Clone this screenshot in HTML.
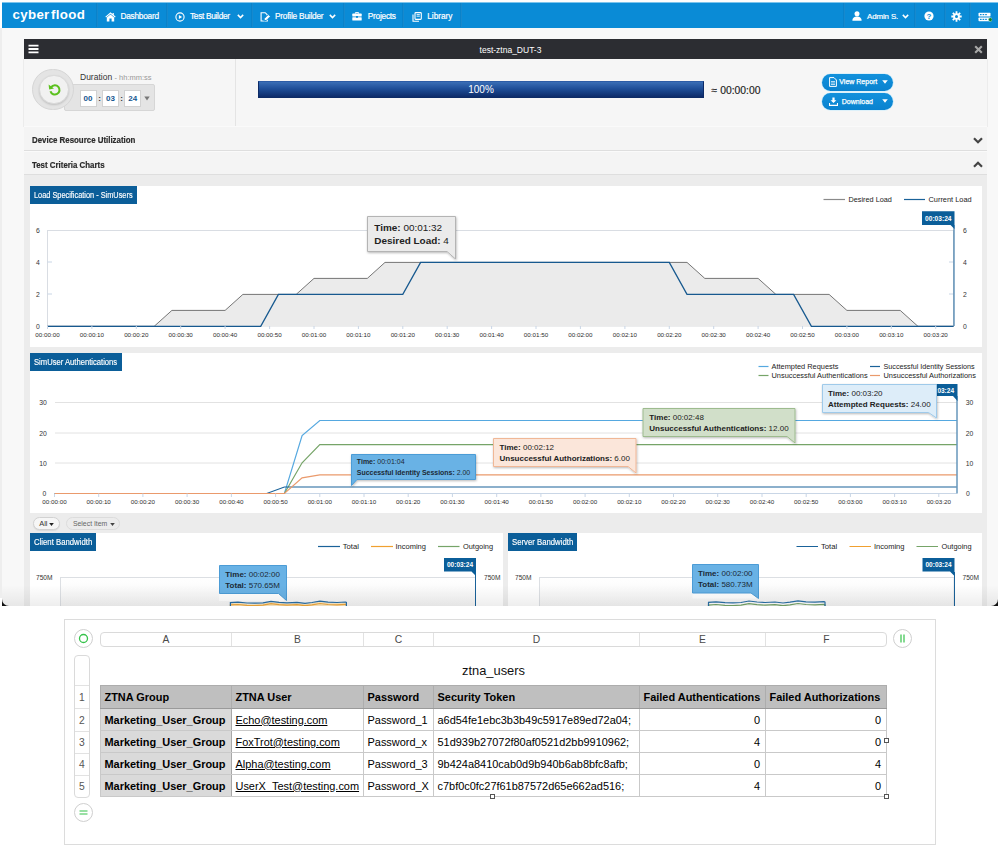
<!DOCTYPE html>
<html lang="en">
<head>
<meta charset="utf-8">
<title>test-ztna_DUT-3</title>
<style>
html,body{margin:0;padding:0;background:#fff;}
body{width:1000px;height:846px;position:relative;overflow:hidden;font-family:"Liberation Sans",sans-serif;color:#222;}
.abs{position:absolute;}
#corner{position:absolute;left:1.8px;top:590px;width:996.6px;height:16.3px;background:#111;}
#shot{position:absolute;left:1.8px;top:0;width:996.6px;height:606.3px;background:#f8f8f8;border-radius:0 0 7px 7px;overflow:hidden;}
#shot .in{position:absolute;left:-1.8px;top:0;width:1000px;height:607px;}
#nav{position:absolute;left:2px;top:2px;width:996.4px;height:25.6px;background:#0a8bd6;border-top:1px solid #7cc4ec;box-sizing:border-box;}
#nav .sep{position:absolute;top:0;width:1px;height:24px;background:rgba(0,40,90,0.09);border-right:1px solid rgba(255,255,255,0.06);}
#nav .t{position:absolute;top:7.6px;color:#fff;font-size:8.3px;line-height:11px;white-space:nowrap;letter-spacing:-0.2px;-webkit-text-stroke:0.2px #fff;}
#logo{position:absolute;left:10.6px;top:3.8px;color:#fff;font-weight:bold;font-size:13.3px;line-height:16px;letter-spacing:0.3px;}
#tbar{position:absolute;left:24px;top:39.3px;width:963px;height:19.6px;background:#2c2d32;}
#tbar .title{position:absolute;left:5px;width:100%;top:4.8px;text-align:center;color:#fff;font-size:8.5px;line-height:12px;}
#ctrl{position:absolute;left:24px;top:59px;width:963px;height:67px;background:#f6f6f6;border-bottom:1px solid #e3e3e3;box-shadow:1px 0 0 #ececec, -1px 0 0 #ececec;}
.row{position:absolute;left:24px;width:963px;height:22.5px;background:#f4f4f4;border-bottom:1.5px solid #dedede;border-top:1px solid #fafafa;box-sizing:content-box;}
.row .lbl{position:absolute;left:8px;top:7.6px;font-size:8.7px;line-height:11px;font-weight:bold;color:#2a2a2a;white-space:nowrap;transform:scaleX(0.907);transform-origin:0 0;-webkit-text-stroke:0.2px #2a2a2a;}
#cbg{position:absolute;left:24px;top:175px;width:963px;height:432px;background:#ececec;}
.panel{position:absolute;background:#fff;}
.tag{position:absolute;background:#0b5e99;color:#fff;font-size:8.3px;line-height:11px;white-space:nowrap;height:18px;box-sizing:border-box;padding:4.2px 0 0 4.3px;}
.tag span{display:inline-block;transform-origin:0 0;-webkit-text-stroke:0.15px #fff;}
.pill{position:absolute;height:13px;border-radius:7px;border:1px solid #d6d6d6;background:#f4f4f4;box-sizing:border-box;font-size:7.8px;line-height:11px;color:#666;white-space:nowrap;text-align:center;}
.tb{position:absolute;top:31px;width:17px;height:17px;background:#fff;border:1px solid #d2d2d2;box-sizing:border-box;color:#14568f;font-size:8px;line-height:15px;text-align:center;font-weight:bold;}
.tc{position:absolute;top:33.8px;width:5px;text-align:center;font-size:8px;line-height:12px;color:#333;font-weight:bold;}
.btn{position:absolute;left:797.8px;width:70.8px;height:17px;border-radius:9px;background:linear-gradient(#1291dc,#0a82cf);box-sizing:border-box;box-shadow:0 0 0 0.6px rgba(190,235,255,0.9);}
.btn span{position:absolute;top:3.5px;color:#fff;font-size:7px;line-height:10px;white-space:nowrap;-webkit-text-stroke:0.25px #fff;}
#sheet{position:absolute;left:64px;top:619px;width:872px;height:225.5px;border:1px solid #dcdcdc;box-sizing:border-box;background:#fff;}
#sheet > *{position:absolute;}
#sheet .circ{margin:-620px 0 0 -65px;width:19px;height:19px;border-radius:10px;border:1px solid #cfcfcf;box-sizing:border-box;background:#fff;}
#sheet .circ svg{position:absolute;left:-1px;top:-1px;}
#colh{left:35px;top:12px;width:787px;height:15px;border:1px solid #dadada;border-radius:4px;box-sizing:border-box;}
#colh div{position:absolute;top:0;height:13px;box-sizing:border-box;border-right:1px solid #e2e2e2;text-align:center;font-size:10.3px;line-height:14px;color:#4a4a4a;}
#rowh{left:9px;top:35px;width:15.5px;height:143px;border:1px solid #dadada;border-radius:4px;box-sizing:border-box;}
#rowh div{position:absolute;left:0;width:13.5px;height:22px;box-sizing:border-box;border-bottom:1px solid #e2e2e2;text-align:center;font-size:10.3px;line-height:22.5px;color:#555;}
#stitle{left:35px;top:43px;width:787px;text-align:center;font-size:12.9px;line-height:16px;color:#111;}
#tbl{left:34.5px;top:65px;border-collapse:collapse;table-layout:fixed;width:787px;font-size:10.95px;color:#000;}
#tbl th,#tbl td{height:22px;box-sizing:border-box;padding:0 0 0 4px;border:1px solid #c9c9c9;text-align:left;white-space:nowrap;overflow:hidden;line-height:18px;}
#tbl th{background:#bfbfbf;border-color:#adadad;border-bottom:1.5px solid #9a9a9a;height:23px;line-height:20px;}
#tbl td.g{background:#dadada;font-weight:bold;border-right-color:#a8a8a8;}
#tbl td{padding-bottom:0;}
#tbl td.n{text-align:right;padding-right:4.5px;}
#sheet .hd{width:5px;height:5px;border:1px solid #555;background:#fff;box-sizing:border-box;margin:-619px 0 0 -64px;}
svg text{font-family:"Liberation Sans",sans-serif;}
</style>
</head>
<body>
<div id="corner"></div>
<div class="abs" style="left:0;top:28px;width:2px;height:570px;background:#eee"></div>
<div id="shot"><div class="in">
  <div class="abs" style="left:0;top:0;width:1000px;height:2.5px;background:#fdfdfc"></div>
  <div id="nav">
    <div id="logo">cybe<span style="letter-spacing:1.8px">r</span>flood</div>
    <div class="sep" style="left:94px"></div><div class="sep" style="left:164px"></div><div class="sep" style="left:249px"></div><div class="sep" style="left:341px"></div><div class="sep" style="left:400px"></div><div class="sep" style="left:458px"></div>
    <div class="sep" style="left:841px"></div><div class="sep" style="left:912px"></div><div class="sep" style="left:942px"></div><div class="sep" style="left:967px"></div>
    <svg class="abs" style="left:103px;top:9px" width="11" height="10" viewBox="0 0 11 10"><path d="M5.5 0.2 L0.3 4.8 L1.1 5.6 L5.5 1.8 L9.9 5.6 L10.7 4.8 L8.8 3.1 V0.9 H7.6 V2 Z" fill="#fff"/><path d="M1.8 5.6 L5.5 2.5 L9.2 5.6 V9.6 H6.6 V6.6 H4.4 V9.6 H1.8 Z" fill="#fff"/></svg>
    <div class="t" style="left:118.5px;font-size:8.3px;letter-spacing:-0.25px">Dashboard</div>
    <svg class="abs" style="left:172.8px;top:8.6px" width="10" height="10" viewBox="0 0 10 10"><circle cx="5" cy="5" r="4.1" fill="none" stroke="#fff" stroke-width="1.1"/><path d="M3.9 3 L7.1 5 L3.9 7 Z" fill="#fff"/></svg>
    <div class="t" style="left:188px;font-size:8.3px;letter-spacing:-0.3px">Test Builder</div>
    <svg class="abs" style="left:234.5px;top:11.2px" width="7" height="5" viewBox="0 0 7 5"><path d="M0.8 0.9 L3.5 3.6 L6.2 0.9" fill="none" stroke="#fff" stroke-width="1.5"/></svg>
    <svg class="abs" style="left:257.5px;top:8.8px" width="11" height="10" viewBox="0 0 11 10"><path d="M1.1 0.7 H5.2 L7.3 2.8 V9 H1.1 Z" fill="none" stroke="#fff" stroke-width="1.1"/><path d="M3.9 8.9 L4.5 6.3 L8.3 2.5 L10.3 4.5 L6.5 8.3 Z" fill="#fff" stroke="#0a8bd6" stroke-width="0.9"/></svg>
    <div class="t" style="left:273px;font-size:8.3px;letter-spacing:-0.22px">Profile Builder</div>
    <svg class="abs" style="left:327px;top:11.2px" width="7" height="5" viewBox="0 0 7 5"><path d="M0.8 0.9 L3.5 3.6 L6.2 0.9" fill="none" stroke="#fff" stroke-width="1.5"/></svg>
    <svg class="abs" style="left:350.3px;top:9.3px" width="10" height="9" viewBox="0 0 10 9"><path d="M3.4 1.6 V0.6 H6.6 V1.6" fill="none" stroke="#fff" stroke-width="1"/><rect x="0.3" y="1.6" width="9.4" height="3" rx="0.6" fill="#fff"/><rect x="0.3" y="5.2" width="9.4" height="3.3" rx="0.6" fill="#fff"/><rect x="4" y="4" width="2" height="1.8" fill="#0a8bd6"/></svg>
    <div class="t" style="left:365.8px;font-size:8.3px;letter-spacing:-0.25px">Projects</div>
    <svg class="abs" style="left:409.5px;top:8.5px" width="10" height="10" viewBox="0 0 10 10"><rect x="3" y="0.6" width="6.3" height="6.8" rx="0.8" fill="none" stroke="#fff" stroke-width="1.1"/><path d="M1 2.6 V9.3 H7" fill="none" stroke="#fff" stroke-width="1.1"/><path d="M4.6 2.6 H7.8 M4.6 4.2 H7.8" stroke="#fff" stroke-width="0.9"/></svg>
    <div class="t" style="left:425.3px;font-size:8.3px;letter-spacing:-0.05px">Library</div>
    <svg class="abs" style="left:849.5px;top:8.2px" width="10" height="10" viewBox="0 0 10 10"><circle cx="5" cy="2.7" r="2.5" fill="#fff"/><path d="M0.4 9.8 C0.4 6.6 2.6 5.6 5 5.6 C7.4 5.6 9.6 6.6 9.6 9.8 Z" fill="#fff"/></svg>
    <div class="t" style="left:865px;font-size:7.9px;letter-spacing:-0.1px;top:7.8px">Admin S.</div>
    <svg class="abs" style="left:899.5px;top:11.2px" width="7" height="5" viewBox="0 0 7 5"><path d="M0.8 0.9 L3.5 3.6 L6.2 0.9" fill="none" stroke="#fff" stroke-width="1.5"/></svg>
    <svg class="abs" style="left:921.5px;top:8.4px" width="10" height="10" viewBox="0 0 10 10"><circle cx="5" cy="5" r="4.6" fill="#fff"/><text x="5" y="8" font-size="8" font-weight="bold" text-anchor="middle" fill="#0a8bd6">?</text></svg>
    <svg class="abs" style="left:948.8px;top:8.2px" width="11" height="11" viewBox="0 0 11 11"><g stroke="#fff" stroke-width="1.8"><path d="M5.5 0.3 V10.7 M0.3 5.5 H10.7 M1.8 1.8 L9.2 9.2 M9.2 1.8 L1.8 9.2"/></g><circle cx="5.5" cy="5.5" r="3.3" fill="#fff"/><circle cx="5.5" cy="5.5" r="1.5" fill="#0a8bd6"/></svg>
    <svg class="abs" style="left:975.5px;top:8.6px" width="14" height="11" viewBox="0 0 14 11"><rect x="0.5" y="0.8" width="12" height="3.6" rx="0.7" fill="#fff"/><rect x="0.5" y="5.6" width="12" height="3.6" rx="0.7" fill="#fff"/><g fill="#0a8bd6"><rect x="2" y="2" width="1.6" height="1.2"/><rect x="4.6" y="2" width="1.6" height="1.2"/><rect x="7.2" y="2" width="1.6" height="1.2"/><rect x="2" y="6.8" width="1.6" height="1.2"/><rect x="4.6" y="6.8" width="1.6" height="1.2"/><rect x="7.2" y="6.8" width="1.6" height="1.2"/></g><circle cx="12.3" cy="7.6" r="1.9" fill="#0c7d22" stroke="#bfe8ff" stroke-width="0.5"/></svg>
  </div>
  <div id="tbar"><div class="title">test-ztna_DUT-3</div>
    <svg class="abs" style="left:4px;top:5px" width="11" height="10" viewBox="0 0 11 10"><path d="M0.5 1.6 H10.5 M0.5 5 H10.5 M0.5 8.4 H10.5" stroke="#fff" stroke-width="1.9"/></svg>
    <svg class="abs" style="left:949.5px;top:5.5px" width="9" height="9" viewBox="0 0 9 9"><path d="M1.2 1.2 L7.8 7.8 M7.8 1.2 L1.2 7.8" stroke="#a8a8a8" stroke-width="2.1"/></svg>
  </div>
  <div id="ctrl">
    <div class="abs" style="left:211px;top:0;width:1px;height:67px;background:#e4e4e4"></div>
    <div class="abs" style="left:40px;top:25px;width:91px;height:27px;background:#e4e4e4;border:1px solid #d6d6d6;border-radius:2px;box-sizing:border-box"></div>
    <div class="abs" style="left:8.2px;top:9.6px;width:41.4px;height:41.4px;border-radius:21px;background:#e4e4e4;border:1px solid #d6d6d6;box-sizing:border-box"></div>
    <div class="abs" style="left:15px;top:15.8px;width:29.6px;height:29.6px;border-radius:15px;background:#f1f1f1;border:1px solid #d9d9d9;box-sizing:border-box;box-shadow:0 1px 2px rgba(0,0,0,0.15)"></div>
    <svg class="abs" style="left:23.6px;top:24.2px" width="14" height="14" viewBox="0 0 14 14"><path d="M3.2 4.2 A4.6 4.6 0 1 1 2.5 8.2" fill="none" stroke="#5cc11f" stroke-width="2.1"/><path d="M0.6 1.6 L1.2 6.6 L6 5.4 Z" fill="#5cc11f"/></svg>
    <div class="abs" style="left:56px;top:13.4px;font-size:8.5px;line-height:11px;color:#333;white-space:nowrap">Duration <span style="font-size:7.5px;color:#999">- hh:mm:ss</span></div>
    <div class="tb" style="left:55.5px">00</div><div class="tc" style="left:73px">:</div>
    <div class="tb" style="left:78px">03</div><div class="tc" style="left:95.2px">:</div>
    <div class="tb" style="left:100.2px">24</div>
    <svg class="abs" style="left:120px;top:37px" width="6" height="5" viewBox="0 0 6 5"><path d="M0.3 0.5 H5.7 L3 4.5 Z" fill="#777"/></svg>
    <div class="abs" style="left:234px;top:22px;width:446px;height:17px;background:linear-gradient(#3a6eb6 0%,#1e4e98 45%,#0d2b69 100%);border:1px solid #0d2b66;border-top-color:#2c5ca6;box-sizing:border-box"></div>
    <div class="abs" style="left:234px;top:25.2px;width:446px;text-align:center;color:#fff;font-size:10px;line-height:12px">100%</div>
    <div class="abs" style="left:687.6px;top:25.7px;color:#1a1a1a;-webkit-text-stroke:0.15px #222;font-size:10.35px;line-height:12px;white-space:nowrap">≈ 00:00:00</div>
    <div class="btn" style="top:14.8px"><svg class="abs" style="left:7px;top:3px" width="8" height="10" viewBox="0 0 8 10"><path d="M0.6 0.6 H5 L7.4 3 V9.4 H0.6 Z" fill="none" stroke="#fff" stroke-width="1"/><path d="M2 4.5 H6 M2 6 H6 M2 7.5 H6" stroke="#fff" stroke-width="0.7"/></svg><span style="left:17.5px">View Report</span><svg class="abs" style="left:60px;top:6px" width="6" height="4" viewBox="0 0 6 4"><path d="M0.2 0.2 H5.8 L3 3.8 Z" fill="#fff"/></svg></div>
    <div class="btn" style="top:34px"><svg class="abs" style="left:7px;top:3.5px" width="9" height="9" viewBox="0 0 9 9"><path d="M3.4 0.4 H5.6 V3.2 H7.4 L4.5 6 L1.6 3.2 H3.4 Z" fill="#fff"/><path d="M0.5 6 V8.4 H8.5 V6" fill="none" stroke="#fff" stroke-width="1.1"/></svg><span style="left:20px">Download</span><svg class="abs" style="left:60px;top:6px" width="6" height="4" viewBox="0 0 6 4"><path d="M0.2 0.2 H5.8 L3 3.8 Z" fill="#fff"/></svg></div>
  </div>
  <div class="row" style="top:126px"><div class="lbl">Device Resource Utilization</div><svg class="abs" style="left:949px;top:9.5px" width="10" height="7" viewBox="0 0 10 7"><path d="M1 1.2 L5 5.2 L9 1.2" fill="none" stroke="#444" stroke-width="2.2"/></svg></div>
  <div class="row" style="top:151px;height:22px"><div class="lbl">Test Criteria Charts</div><svg class="abs" style="left:949px;top:9px" width="10" height="7" viewBox="0 0 10 7"><path d="M1 5.8 L5 1.8 L9 5.8" fill="none" stroke="#444" stroke-width="2.2"/></svg></div>
  <div id="cbg"></div>
  <div class="panel" style="left:30px;top:186px;width:951.5px;height:161px"></div>
  <div class="panel" style="left:30px;top:353px;width:951.5px;height:160px"></div>
  <div class="panel" style="left:30px;top:533px;width:473px;height:80px"></div>
  <div class="panel" style="left:508px;top:533px;width:473.5px;height:80px"></div>
  <svg class="abs" style="left:0;top:0" width="1000" height="607" viewBox="0 0 1000 607">
  <defs>
    <filter id="sh" x="-10%" y="-10%" width="125%" height="140%"><feDropShadow dx="0.6" dy="1" stdDeviation="0.9" flood-color="#000" flood-opacity="0.28"/></filter>
    <linearGradient id="pg" x1="0" y1="0" x2="0" y2="1"><stop offset="0" stop-color="#fff"/><stop offset="1" stop-color="#f1f1f1"/></linearGradient>
  </defs>
  <!-- chart 1 : Load Specification -->
  <g>
    <rect x="47.5" y="230.5" width="906" height="95.5" fill="#fff" stroke="#d9dde3" stroke-width="1"/>
    <path d="M47.5 262 H52 M47.5 294 H52 M949 262 H953.5 M949 294 H953.5" stroke="#c9d6e6" stroke-width="1"/>
    <polygon points="47.5,326.4 154.1,326.4 171.9,310.4 225.1,310.4 242.9,294.4 296.2,294.4 314.0,278.4 367.3,278.4 385.0,262.4 687.0,262.4 704.8,278.4 758.1,278.4 775.9,294.4 829.1,294.4 846.9,310.4 900.2,310.4 918.0,326.4 953.5,326.4" fill="#ebebeb"/>
    <polyline points="47.5,326.4 154.1,326.4 171.9,310.4 225.1,310.4 242.9,294.4 296.2,294.4 314.0,278.4 367.3,278.4 385.0,262.4 687.0,262.4 704.8,278.4 758.1,278.4 775.9,294.4 829.1,294.4 846.9,310.4 900.2,310.4 918.0,326.4 953.5,326.4" fill="none" stroke="#757575" stroke-width="1"/>
    <polyline points="47.5,326.4 260.7,326.4 278.4,294.4 402.8,294.4 420.6,262.4 669.3,262.4 687.0,294.4 793.6,294.4 811.4,326.4 953.5,326.4" fill="none" stroke="#17598f" stroke-width="1.3"/>
    <g font-size="6.8" fill="#333" text-anchor="middle">
      <text x="38" y="232.5">6</text><text x="38" y="264.5">4</text><text x="38" y="296.5">2</text><text x="38" y="328.5">0</text>
      <text x="965" y="232.5">6</text><text x="965" y="264.5">4</text><text x="965" y="296.5">2</text><text x="965" y="328.5">0</text>
    </g>
    <path d="M47.5 326 V329 M91.9 326 V329 M136.3 326 V329 M180.7 326 V329 M225.1 326 V329 M269.6 326 V329 M314.0 326 V329 M358.4 326 V329 M402.8 326 V329 M447.2 326 V329 M491.6 326 V329 M536.0 326 V329 M580.4 326 V329 M624.9 326 V329 M669.3 326 V329 M713.7 326 V329 M758.1 326 V329 M802.5 326 V329 M846.9 326 V329 M891.3 326 V329 M935.7 326 V329" stroke="#c9d6e6" stroke-width="1"/>
<g font-size="6.25" fill="#2a2a2a" text-anchor="middle">
<text x="47.5" y="337.3">00:00:00</text>
<text x="91.9" y="337.3">00:00:10</text>
<text x="136.3" y="337.3">00:00:20</text>
<text x="180.7" y="337.3">00:00:30</text>
<text x="225.1" y="337.3">00:00:40</text>
<text x="269.6" y="337.3">00:00:50</text>
<text x="314.0" y="337.3">00:01:00</text>
<text x="358.4" y="337.3">00:01:10</text>
<text x="402.8" y="337.3">00:01:20</text>
<text x="447.2" y="337.3">00:01:30</text>
<text x="491.6" y="337.3">00:01:40</text>
<text x="536.0" y="337.3">00:01:50</text>
<text x="580.4" y="337.3">00:02:00</text>
<text x="624.9" y="337.3">00:02:10</text>
<text x="669.3" y="337.3">00:02:20</text>
<text x="713.7" y="337.3">00:02:30</text>
<text x="758.1" y="337.3">00:02:40</text>
<text x="802.5" y="337.3">00:02:50</text>
<text x="846.9" y="337.3">00:03:00</text>
<text x="891.3" y="337.3">00:03:10</text>
<text x="935.7" y="337.3">00:03:20</text>
</g>
    <path d="M823.5 199.5 H845" stroke="#8a8a8a" stroke-width="1.2"/><text x="848.5" y="202" font-size="7.3" fill="#222">Desired Load</text>
    <path d="M904 199.5 H925" stroke="#1a6299" stroke-width="1.2"/><text x="928.5" y="202" font-size="7.4" fill="#222">Current Load</text>
    <path d="M954 225 V326" stroke="#1a6299" stroke-width="1"/>
    <path d="M922 211.3 H954.5 V229 L950.5 225 H922 Z" fill="#0b5e99"/>
    <text x="938.3" y="220.8" font-size="6.6" font-weight="bold" fill="#fff" text-anchor="middle">00:03:24</text>
    <path d="M367.5 216.5 H455.5 V259 L447 251.5 H367.5 Z" fill="#ebebeb" stroke="#b4b4b4" stroke-width="1" filter="url(#sh)"/>
    <text x="374.3" y="230.6" font-size="9.95" fill="#222"><tspan font-weight="bold">Time:</tspan> 00:01:32</text>
    <text x="374.3" y="244.2" font-size="9.95" fill="#222"><tspan font-weight="bold">Desired Load:</tspan> 4</text>
  </g>
  <!-- chart 2 : SimUser Authentications -->
  <g>
    <path d="M55 402.5 H956.5 M55 433 H956.5 M55 463 H956.5" stroke="#e2e2e2" stroke-width="1"/>
    <path d="M55 493.5 H956.5" stroke="#c9d6e6" stroke-width="1"/>
    <polyline points="54.5,493.5 284.4,493.5 302.1,435.6 319.8,420.5 956.5,420.5" fill="none" stroke="#55a8e0" stroke-width="1.2"/>
    <polyline points="54.5,493.5 284.4,493.5 302.1,462.8 319.8,444.7 956.5,444.7" fill="none" stroke="#76a468" stroke-width="1.2"/>
    <polyline points="54.5,493.5 266.7,493.5 284.4,487.0 956.5,487.0" fill="none" stroke="#1a6299" stroke-width="1.15"/>
    <polyline points="54.5,493.5 284.4,493.5 302.1,477.9 319.8,474.9 956.5,474.9" fill="none" stroke="#ea9a6c" stroke-width="1.2"/>
    <g font-size="6.8" fill="#333" text-anchor="middle">
      <text x="43" y="405">30</text><text x="43" y="435.5">20</text><text x="43" y="465.5">10</text><text x="44.5" y="495.5">0</text>
      <text x="969.5" y="405">30</text><text x="969.5" y="435.5">20</text><text x="969.5" y="465.5">10</text><text x="968" y="495.5">0</text>
    </g>
    <path d="M54.5 493.5 V497 M98.7 493.5 V497 M142.9 493.5 V497 M187.1 493.5 V497 M231.4 493.5 V497 M275.6 493.5 V497 M319.8 493.5 V497 M364.0 493.5 V497 M408.2 493.5 V497 M452.4 493.5 V497 M496.7 493.5 V497 M540.9 493.5 V497 M585.1 493.5 V497 M629.3 493.5 V497 M673.5 493.5 V497 M717.7 493.5 V497 M762.0 493.5 V497 M806.2 493.5 V497 M850.4 493.5 V497 M894.6 493.5 V497 M938.8 493.5 V497" stroke="#c9d6e6" stroke-width="1"/>
<g font-size="6.25" fill="#2a2a2a" text-anchor="middle">
<text x="54.5" y="504.3">00:00:00</text>
<text x="98.7" y="504.3">00:00:10</text>
<text x="142.9" y="504.3">00:00:20</text>
<text x="187.1" y="504.3">00:00:30</text>
<text x="231.4" y="504.3">00:00:40</text>
<text x="275.6" y="504.3">00:00:50</text>
<text x="319.8" y="504.3">00:01:00</text>
<text x="364.0" y="504.3">00:01:10</text>
<text x="408.2" y="504.3">00:01:20</text>
<text x="452.4" y="504.3">00:01:30</text>
<text x="496.7" y="504.3">00:01:40</text>
<text x="540.9" y="504.3">00:01:50</text>
<text x="585.1" y="504.3">00:02:00</text>
<text x="629.3" y="504.3">00:02:10</text>
<text x="673.5" y="504.3">00:02:20</text>
<text x="717.7" y="504.3">00:02:30</text>
<text x="762.0" y="504.3">00:02:40</text>
<text x="806.2" y="504.3">00:02:50</text>
<text x="850.4" y="504.3">00:03:00</text>
<text x="894.6" y="504.3">00:03:10</text>
<text x="938.8" y="504.3">00:03:20</text>
</g>
    <path d="M758.5 366.5 H768.5" stroke="#55a8e0" stroke-width="1.2"/><text x="771.5" y="368.8" font-size="7.4" fill="#222">Attempted Requests</text>
    <path d="M870 366.5 H880" stroke="#1a6299" stroke-width="1.2"/><text x="883.5" y="368.8" font-size="7.2" fill="#222">Successful Identity Sessions</text>
    <path d="M758.5 375.5 H768.5" stroke="#76a468" stroke-width="1.2"/><text x="771.5" y="377.8" font-size="7.4" fill="#222">Unsuccessful Authentications</text>
    <path d="M870 375.5 H880" stroke="#ea9a6c" stroke-width="1.2"/><text x="883.5" y="377.8" font-size="7.4" fill="#222">Unsuccessful Authorizations</text>
    <path d="M957 396 V493.5" stroke="#1a6299" stroke-width="1"/>
    <path d="M925 384 H957.5 V401 L953 396 H925 Z" fill="#0b5e99"/>
    <text x="941" y="392.8" font-size="6.5" font-weight="bold" fill="#fff" text-anchor="middle">00:03:24</text>
    <path d="M351.5 454.5 H475.5 V479.5 H357 L351.5 485.5 Z" fill="#69b2e5" stroke="#4c9cd6" stroke-width="1" filter="url(#sh)"/>
    <text x="356.8" y="464.3" font-size="7" fill="#1c2a36"><tspan font-weight="bold">Time:</tspan> 00:01:04</text>
    <text x="356.8" y="474.7" font-size="6.95" fill="#1c2a36"><tspan font-weight="bold">Successful Identity Sessions:</tspan> 2.00</text>
    <path d="M493.5 438.5 H636 V473 L628 466.5 H493.5 Z" fill="#fbe6da" stroke="#f0b796" stroke-width="1" filter="url(#sh)"/>
    <text x="499.5" y="450" font-size="8" fill="#222"><tspan font-weight="bold">Time:</tspan> 00:02:12</text>
    <text x="499.5" y="461.1" font-size="8" fill="#222"><tspan font-weight="bold">Unsuccessful Authorizations:</tspan> 6.00</text>
    <path d="M643 408.5 H795 V443 L787 436.5 H643 Z" fill="#d1dfc9" stroke="#9dbb8e" stroke-width="1" filter="url(#sh)"/>
    <text x="649.3" y="420" font-size="8" fill="#222"><tspan font-weight="bold">Time:</tspan> 00:02:48</text>
    <text x="649.3" y="431" font-size="8" fill="#222"><tspan font-weight="bold">Unsuccessful Authentications:</tspan> 12.00</text>
    <path d="M822.5 384.5 H936.5 V418 L928.5 412.5 H822.5 Z" fill="#ddedf9" stroke="#9fcaea" stroke-width="1" filter="url(#sh)"/>
    <text x="828" y="395.6" font-size="8" fill="#222"><tspan font-weight="bold">Time:</tspan> 00:03:20</text>
    <text x="828" y="406.6" font-size="8" fill="#222"><tspan font-weight="bold">Attempted Requests:</tspan> 24.00</text>
  </g>
  <!-- chart 3 : Client Bandwidth -->
  <g>
    <rect x="60.5" y="577.5" width="415" height="40" fill="url(#pg)" stroke="#dcdfe3" stroke-width="1"/>
    <text x="36" y="580" font-size="6.6" fill="#333">750M</text><text x="484" y="580" font-size="6.6" fill="#333">750M</text>
    <path d="M318 546.5 H340" stroke="#1a6299" stroke-width="1.2"/><text x="342.7" y="548.8" font-size="7.7" fill="#222">Total</text>
    <path d="M371 546.5 H393" stroke="#f0a030" stroke-width="1.2"/><text x="395.5" y="548.8" font-size="7.5" fill="#222">Incoming</text>
    <path d="M438 546.5 H459.5" stroke="#76a468" stroke-width="1.2"/><text x="463" y="548.8" font-size="7.4" fill="#222">Outgoing</text>
    <rect x="219" y="594" width="65" height="7" fill="#fff"/>
    <path d="M230.4 607 L230.4 603.1 L238 602.7 L247 603.5 L255 603.7 L263 603.4 L271 601.9 L279 602.9 L287 603.4 L297 602.9 L305 603.9 L312 603.0 L320 601.7 L328 602.7 L337 603.0 L345.5 602.5 L346.4 602.9 L346.4 607 Z" fill="#fdebc8"/>
    <path d="M230.4 607 L230.4 604.9 L238 604.5 L247 605.3 L255 605.5 L263 605.2 L271 603.7 L279 604.7 L287 605.2 L297 604.7 L305 605.7 L312 604.8 L320 603.5 L328 604.5 L337 604.8 L345.5 604.3 L346.4 604.7 L346.4 607" fill="none" stroke="#f2a93b" stroke-width="1.2"/>
    <path d="M230.4 607 L230.4 602.6 L238 602.2 L247 603 L255 603.2 L263 602.9 L271 601.4 L279 602.4 L287 602.9 L297 602.4 L305 603.4 L312 602.5 L320 601.2 L328 602.2 L337 602.5 L345.5 602 L346.4 602.4 L346.4 607" fill="none" stroke="#2a6fa6" stroke-width="1.2"/>
    <path d="M475.5 572 V607" stroke="#1a6299" stroke-width="1"/>
    <path d="M444 558 H476 V576 L471.5 571.5 H444 Z" fill="#0b5e99"/>
    <text x="460" y="567" font-size="6.5" font-weight="bold" fill="#fff" text-anchor="middle">00:03:24</text>
    <path d="M219.5 565.5 H286.5 V600.5 L278.5 593.5 H219.5 Z" fill="#69b2e5" stroke="#4c9cd6" stroke-width="1"/>
    <text x="225.3" y="576.9" font-size="8" fill="#1c2a36"><tspan font-weight="bold">Time:</tspan> 00:02:00</text>
    <text x="225.3" y="587.9" font-size="8" fill="#1c2a36"><tspan font-weight="bold">Total:</tspan> 570.65M</text>
  </g>
  <!-- chart 4 : Server Bandwidth -->
  <g>
    <rect x="539.5" y="577.5" width="414.5" height="40" fill="url(#pg)" stroke="#dcdfe3" stroke-width="1"/>
    <text x="515" y="580" font-size="6.6" fill="#333">750M</text><text x="962.5" y="580" font-size="6.6" fill="#333">750M</text>
    <path d="M796.5 546.5 H818" stroke="#1a6299" stroke-width="1.2"/><text x="821" y="548.8" font-size="7.7" fill="#222">Total</text>
    <path d="M849.5 546.5 H871" stroke="#f0a030" stroke-width="1.2"/><text x="874" y="548.8" font-size="7.5" fill="#222">Incoming</text>
    <path d="M916.5 546.5 H938" stroke="#76a468" stroke-width="1.2"/><text x="941.5" y="548.8" font-size="7.4" fill="#222">Outgoing</text>
    <rect x="692.5" y="593" width="64" height="5.5" fill="#fff"/>
    <path d="M708.5 607 L708.5 602.4 L716 601.8 L725 602.6 L733 602.8 L741 602.5 L749 601.0 L757 602.0 L765 602.5 L775 602.0 L783 603.0 L790 602.1 L798 600.8 L806 601.8 L815 602.1 L824 601.6 L825 602.2 L825 607 Z" fill="#fff"/>
    <path d="M708.5 607 L708.5 605.1 L716 604.5 L725 605.3 L733 605.5 L741 605.2 L749 603.7 L757 604.7 L765 605.2 L775 604.7 L783 605.7 L790 604.8 L798 603.5 L806 604.5 L815 604.8 L824 604.3 L825 604.9 L825 607" fill="none" stroke="#76a468" stroke-width="1.2"/>
    <path d="M708.5 607 L708.5 602.4 L716 601.8 L725 602.6 L733 602.8 L741 602.5 L749 601.0 L757 602.0 L765 602.5 L775 602.0 L783 603.0 L790 602.1 L798 600.8 L806 601.8 L815 602.1 L824 601.6 L825 602.2 L825 607" fill="none" stroke="#2a6fa6" stroke-width="1.2"/>
    <path d="M954.5 572 V607" stroke="#1a6299" stroke-width="1"/>
    <path d="M922.5 558 H954.5 V576 L950 571.5 H922.5 Z" fill="#0b5e99"/>
    <text x="938.5" y="567" font-size="6.5" font-weight="bold" fill="#fff" text-anchor="middle">00:03:24</text>
    <path d="M692.5 564.5 H758.5 V598.5 L751 593 H692.5 Z" fill="#69b2e5" stroke="#4c9cd6" stroke-width="1"/>
    <text x="698" y="575.5" font-size="8" fill="#1c2a36"><tspan font-weight="bold">Time:</tspan> 00:02:00</text>
    <text x="698" y="586.5" font-size="8" fill="#1c2a36"><tspan font-weight="bold">Total:</tspan> 580.73M</text>
  </g>
  </svg>
  <div class="tag" style="left:30px;top:186px;width:107px"><span style="transform:scaleX(0.887)">Load Specification - SimUsers</span></div>
  <div class="tag" style="left:30px;top:353px;width:92px"><span style="transform:scaleX(0.92)">SimUser Authentications</span></div>
  <div class="tag" style="left:30px;top:533px;width:66px"><span style="transform:scaleX(0.935)">Client Bandwidth</span></div>
  <div class="tag" style="left:508px;top:533px;width:69px"><span style="transform:scaleX(0.935)">Server Bandwidth</span></div>
  <div class="pill" style="left:32.7px;top:517px;width:27px;color:#333;background:#f6f6f6;border-color:#d2d2d2;box-shadow:0 1px 1px rgba(0,0,0,0.08)"><span class="abs" style="left:5.6px;top:-0.2px;font-size:7.4px">All</span><svg class="abs" style="left:15.6px;top:4.9px" width="5" height="3" viewBox="0 0 5 3"><path d="M0.2 0.1 H4.8 L2.5 2.9 Z" fill="#222"/></svg></div>
  <div class="pill" style="left:65.5px;top:517px;width:54.3px;background:#ececec;border-color:#dcdcdc"><span class="abs" style="left:6.4px;top:-0.2px;font-size:6.9px;color:#666">Select Item</span><svg class="abs" style="left:43px;top:4.9px" width="5" height="3" viewBox="0 0 5 3"><path d="M0.2 0.1 H4.8 L2.5 2.9 Z" fill="#444"/></svg></div>
  <div class="abs" style="left:0;top:585px;width:1000px;height:22px;background:linear-gradient(rgba(0,0,0,0),rgba(0,0,0,0.07))"></div>
</div></div>
<div id="sheet">
  <div class="circ" style="left:74px;top:629px"><svg width="19" height="19" viewBox="0 0 19 19"><circle cx="9.5" cy="9.5" r="4" fill="none" stroke="#35c24a" stroke-width="1.3"/></svg></div>
  <div class="circ" style="left:893px;top:629px"><svg width="19" height="19" viewBox="0 0 19 19"><path d="M8 5.5 V13.5 M11 5.5 V13.5" stroke="#35c24a" stroke-width="1.2"/></svg></div>
  <div class="circ" style="left:74px;top:803px"><svg width="19" height="19" viewBox="0 0 19 19"><path d="M5.5 8 H13.5 M5.5 11 H13.5" stroke="#35c24a" stroke-width="1.2"/></svg></div>
  <div id="colh">
    <div style="left:0;width:131px">A</div><div style="left:131px;width:132px">B</div><div style="left:263px;width:70px">C</div><div style="left:333px;width:206px">D</div><div style="left:539px;width:126px">E</div><div style="left:665px;width:121px;border-right:0">F</div>
  </div>
  <div id="rowh">
    <div style="top:0;height:30px"></div><div style="top:31px">1</div><div style="top:53.5px">2</div><div style="top:75.5px">3</div><div style="top:97.5px">4</div><div style="top:119.5px;border-bottom:0">5</div>
  </div>
  <div id="stitle">ztna_users</div>
  <table id="tbl">
    <colgroup><col style="width:131px"><col style="width:132px"><col style="width:70px"><col style="width:206px"><col style="width:126px"><col style="width:121px"></colgroup>
      <tr class="h"><th>ZTNA Group</th><th>ZTNA User</th><th>Password</th><th>Security Token</th><th>Failed Authentications</th><th>Failed Authorizations</th></tr>
      <tr><td class="g">Marketing_User_Group</td><td><u>Echo@testing.com</u></td><td>Password_1</td><td>a6d54fe1ebc3b3b49c5917e89ed72a04;</td><td class="n">0</td><td class="n">0</td></tr>
      <tr><td class="g">Marketing_User_Group</td><td><u>FoxTrot@testing.com</u></td><td>Password_x</td><td>51d939b27072f80af0521d2bb9910962;</td><td class="n">4</td><td class="n">0</td></tr>
      <tr><td class="g">Marketing_User_Group</td><td><u>Alpha@testing.com</u></td><td>Password_3</td><td>9b424a8410cab0d9b940b6ab8bfc8afb;</td><td class="n">0</td><td class="n">4</td></tr>
      <tr><td class="g">Marketing_User_Group</td><td><u>UserX_Test@testing.com</u></td><td>Password_X</td><td>c7bf0c0fc27f61b87572d65e662ad516;</td><td class="n">4</td><td class="n">0</td></tr>
  </table>
  <div class="hd" style="left:489.3px;top:793px"></div><div class="hd" style="left:883.2px;top:737px"></div><div class="hd" style="left:883.2px;top:793px"></div>
</div>
</body>
</html>
